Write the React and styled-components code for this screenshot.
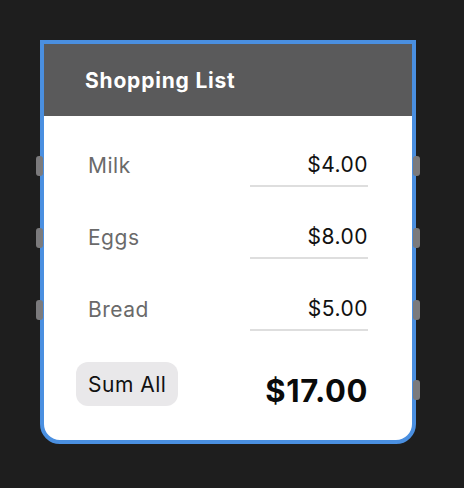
import styled, { createGlobalStyle } from "styled-components";

const GlobalStyle = createGlobalStyle`
  html, body {
    margin: 0;
    padding: 0;
    background: #1e1e1e;
  }
  body {
    font-family: Inter, "Noto Sans", sans-serif;
  }
`;

const Canvas = styled.div`
  padding: 40px 0 0 40px;
  height: 448px;
`;

const Node = styled.div`
  width: 376px;
  box-sizing: border-box;
  border: 4px solid #4a8fe0;
  border-radius: 0 0 20px 20px;
  background: #ffffff;
`;

const Header = styled.div`
  height: 72px;
  display: flex;
  align-items: center;
  padding-left: 41px;
  background: #5a5a5b;
  color: #ffffff;
  font-size: 21px;
  font-weight: 700;
  letter-spacing: 0.8px;
`;

const Body = styled.div`
  display: flex;
  flex-direction: column;
  gap: 28px;
  padding: 27px 44px 34px;
`;

const Row = styled.div`
  position: relative;
  display: flex;
  align-items: center;
  justify-content: space-between;
  height: 44px;
  font-size: 21px;
  letter-spacing: 0.5px;
`;

const Port = styled.span`
  position: absolute;
  top: ${(p) => p.$top}px;
  ${(p) => p.$side}: -52px;
  width: 7px;
  height: 20px;
  border-radius: 3px;
  background: #7b7a7c;
`;

const Label = styled.span`
  color: #6a6a6a;
`;

const Price = styled.div`
  width: 118px;
  height: 44px;
  box-sizing: border-box;
  display: flex;
  align-items: center;
  justify-content: flex-end;
  border-bottom: 2px solid #dedede;
  color: #111111;
`;

const Footer = styled(Row)`
  margin: 3px 0 0 -12px;
`;

const SumButton = styled.button`
  height: 44px;
  padding: 0 12px;
  border: none;
  border-radius: 12px;
  background: #e9e8ea;
  font-family: inherit;
  font-size: 21px;
  letter-spacing: 0.5px;
  color: #111111;
  cursor: pointer;
`;

const Total = styled.span`
  margin-top: 12px;
  font-size: 31px;
  font-weight: 700;
  letter-spacing: 0.6px;
  color: #0a0a0a;
`;

const items = [
  { name: "Milk", price: 4 },
  { name: "Eggs", price: 8 },
  { name: "Bread", price: 5 },
];

const App = () => {
  const total = items.reduce((s, i) => s + i.price, 0);
  return (
    <Canvas>
      <GlobalStyle />
      <Node>
        <Header>Shopping List</Header>
        <Body>
          {items.map((item) => (
            <Row key={item.name}>
              <Port $side="left" $top={13} />
              <Label>{item.name}</Label>
              <Price>${item.price.toFixed(2)}</Price>
              <Port $side="right" $top={13} />
            </Row>
          ))}
          <Footer>
            <SumButton>Sum All</SumButton>
            <Total>${total.toFixed(2)}</Total>
            <Port $side="right" $top={18} />
          </Footer>
        </Body>
      </Node>
    </Canvas>
  );
};

export default App;
